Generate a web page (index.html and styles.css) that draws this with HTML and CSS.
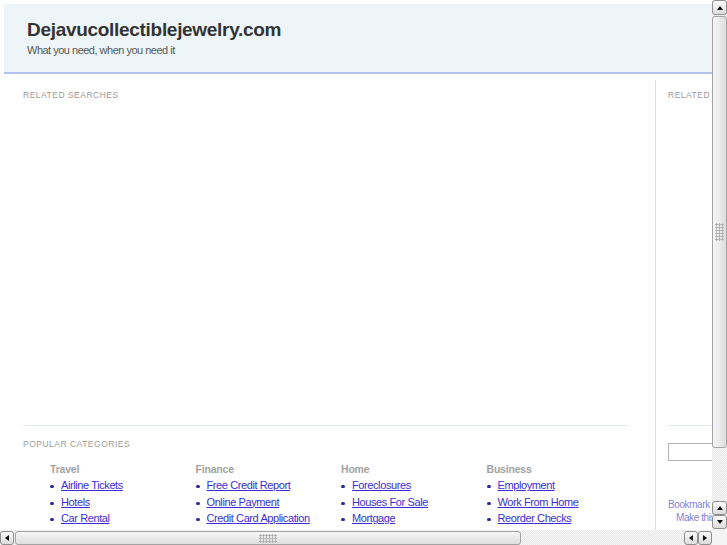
FILE: index.html
```html
<!DOCTYPE html>
<html>
<head>
<meta charset="utf-8">
<link rel="stylesheet" href="styles.css">
</head>
<body>
<div class="window">
  <div class="viewport">
    <div class="head">
      <h1 class="title">Dejavucollectiblejewelry.com</h1>
      <p class="tag">What you need, when you need it</p>
    </div>
    <div class="main">
      <div class="left">
        <h2 class="label">Related Searches</h2>
        <div class="ads"></div>
        <div class="popular">
          <h2 class="label">Popular Categories</h2>
          <div class="cats">
            <div class="cat">
              <h3 class="cat-title">Travel</h3>
              <ul class="links">
                <li><a href="#">Airline Tickets</a></li>
                <li><a href="#">Hotels</a></li>
                <li><a href="#">Car Rental</a></li>
              </ul>
            </div>
            <div class="cat">
              <h3 class="cat-title">Finance</h3>
              <ul class="links">
                <li><a href="#">Free Credit Report</a></li>
                <li><a href="#">Online Payment</a></li>
                <li><a href="#">Credit Card Application</a></li>
              </ul>
            </div>
            <div class="cat">
              <h3 class="cat-title">Home</h3>
              <ul class="links">
                <li><a href="#">Foreclosures</a></li>
                <li><a href="#">Houses For Sale</a></li>
                <li><a href="#">Mortgage</a></li>
              </ul>
            </div>
            <div class="cat">
              <h3 class="cat-title">Business</h3>
              <ul class="links">
                <li><a href="#">Employment</a></li>
                <li><a href="#">Work From Home</a></li>
                <li><a href="#">Reorder Checks</a></li>
              </ul>
            </div>
          </div>
        </div>
      </div>
      <div class="right">
        <h2 class="label">Related</h2>
        <div class="rspace"></div>
        <div class="rsearch">
          <div class="search-box"></div>
          <div class="bookmark">
            <a class="bm-line" href="#">Bookmark this page</a>
            <a class="bm-line bm-indent" href="#">Make this your homepage</a>
          </div>
        </div>
      </div>
    </div>
  </div>

  <div class="vscroll">
    <div class="sbtn"><span class="tri tri-up"></span></div>
    <div class="vthumb"><span class="grip vgrip"></span></div>
    <div class="fill"></div>
    <div class="sbtn sbtn-s"><span class="tri tri-up"></span></div>
    <div class="sbtn sbtn-s sbtn-last"><span class="tri tri-down"></span></div>
  </div>

  <div class="hscroll">
    <div class="sbtn hbtn"><span class="tri tri-left"></span></div>
    <div class="hthumb"><span class="grip hgrip"></span></div>
    <div class="fill"></div>
    <div class="sbtn hbtn"><span class="tri tri-left"></span></div>
    <div class="sbtn hbtn"><span class="tri tri-right"></span></div>
  </div>

  <div class="corner"></div>
</div>
</body>
</html>
```

FILE: styles.css
```css
* { box-sizing: border-box; }

html, body {
  margin: 0;
  padding: 0;
  background: #ffffff;
}

body {
  font-family: "Liberation Sans", Arial, Helvetica, sans-serif;
}

.window {
  width: 727px;
  height: 545px;
  display: grid;
  grid-template-columns: 712px 15px;
  grid-template-rows: 530px 15px;
  overflow: hidden;
}

.viewport {
  overflow: hidden;
  background: #ffffff;
}

/* Header */
.head {
  margin: 4px 0 0 4px;
  height: 70px;
  background: #eef5f8;
  border-bottom: 2px solid #aec4ea;
  padding: 15px 0 0 23px;
}

.title {
  margin: 0;
  font-size: 19px;
  line-height: 22px;
  font-weight: bold;
  color: #333333;
  letter-spacing: -0.3px;
}

.tag {
  margin: 3px 0 0;
  font-size: 11px;
  line-height: 13px;
  color: #555555;
  letter-spacing: -0.5px;
}

/* Main area */
.main {
  display: flex;
  margin-top: 6px;
  padding-left: 23px;
  height: 450px;
}

.left {
  width: 605px;
  flex: none;
  padding-top: 10px;
}

.label {
  margin: 0;
  font-size: 8.5px;
  line-height: 10px;
  font-weight: normal;
  color: #9c9c9c;
  text-transform: uppercase;
  letter-spacing: 0.5px;
  white-space: nowrap;
}

.ads {
  height: 325px;
}

.popular {
  border-top: 1px solid #e1e9f6;
  padding-top: 13px;
}

.cats {
  display: grid;
  grid-template-columns: repeat(4, 145.5px);
  padding-left: 27px;
  margin-top: 14px;
}

.cat-title {
  margin: 0;
  font-size: 10.5px;
  line-height: 12px;
  font-weight: bold;
  color: #a2a2a2;
  letter-spacing: -0.2px;
}

.links {
  list-style: none;
  margin: 2px 0 0;
  padding: 0;
}

.links li {
  position: relative;
  font-size: 11px;
  line-height: 16.5px;
  padding-left: 11px;
  white-space: nowrap;
}

.links li::before {
  content: "";
  position: absolute;
  left: 0;
  top: 8px;
  width: 4px;
  height: 3px;
  border-radius: 2px;
  background: #2c2a9e;
}

.links a {
  color: #3a2fd6;
  text-decoration: underline;
  letter-spacing: -0.4px;
}

/* Right column */
.right {
  flex: none;
  width: 200px;
  margin-left: 27px;
  border-left: 1px solid #d3def2;
  padding: 10px 0 0 12px;
}

.rspace {
  height: 325px;
}

.rsearch {
  border-top: 1px solid #e1e9f6;
  padding-top: 17px;
}

.search-box {
  width: 150px;
  height: 18px;
  border: 1px solid #b4b4b4;
  background: #ffffff;
}

.bookmark {
  margin-top: 37px;
}

.bm-line {
  display: block;
  font-size: 10px;
  line-height: 13px;
  color: #8484d8;
  text-decoration: none;
  letter-spacing: -0.4px;
  white-space: nowrap;
}

.bm-indent {
  padding-left: 8px;
}

/* Scrollbars */
.vscroll {
  display: flex;
  flex-direction: column;
  background: repeating-conic-gradient(#e8e8e8 0 25%, #f7f7f7 0 50%) 0 0 / 2px 2px;
}

.hscroll {
  display: flex;
  flex-direction: row;
  background: repeating-conic-gradient(#e8e8e8 0 25%, #f7f7f7 0 50%) 0 0 / 2px 2px;
}

.fill {
  flex: 1;
}

.corner {
  background: #f4f4f4;
}

.sbtn {
  flex: none;
  width: 15px;
  height: 15px;
  border: 1px solid #8f8f8f;
  border-radius: 3px;
  background: linear-gradient(#fbfbfb, #dcdcdc);
  display: flex;
  align-items: center;
  justify-content: center;
}

.sbtn-s {
  height: 14px;
}

.sbtn-last {
  margin-bottom: 1px;
}

.hbtn {
  width: 14px;
  height: 14px;
  margin-top: 1px;
}

.tri {
  width: 0;
  height: 0;
  border-style: solid;
}

.tri-up {
  border-width: 0 3.5px 4px 3.5px;
  border-color: transparent transparent #111 transparent;
}

.tri-down {
  border-width: 4px 3.5px 0 3.5px;
  border-color: #111 transparent transparent transparent;
}

.tri-left {
  border-width: 3.5px 4px 3.5px 0;
  border-color: transparent #111 transparent transparent;
}

.tri-right {
  border-width: 3.5px 0 3.5px 4px;
  border-color: transparent transparent transparent #111;
}

.vthumb {
  flex: none;
  height: 432px;
  margin-top: 1px;
  border: 1px solid #a3a3a3;
  border-radius: 3px;
  background: linear-gradient(90deg, #f6f6f6, #dedede);
  display: flex;
  align-items: center;
  justify-content: center;
}

.hthumb {
  flex: none;
  width: 506px;
  margin: 1px 0 0 1px;
  border: 1px solid #a3a3a3;
  border-radius: 3px;
  background: linear-gradient(#f6f6f6, #dedede);
  display: flex;
  align-items: center;
  justify-content: center;
}

.grip {
  display: block;
  background-image: radial-gradient(circle, #a8a8a8 0.9px, transparent 1.3px);
  background-size: 3px 3px;
}

.vgrip {
  width: 9px;
  height: 18px;
}

.hgrip {
  width: 18px;
  height: 9px;
}
```
